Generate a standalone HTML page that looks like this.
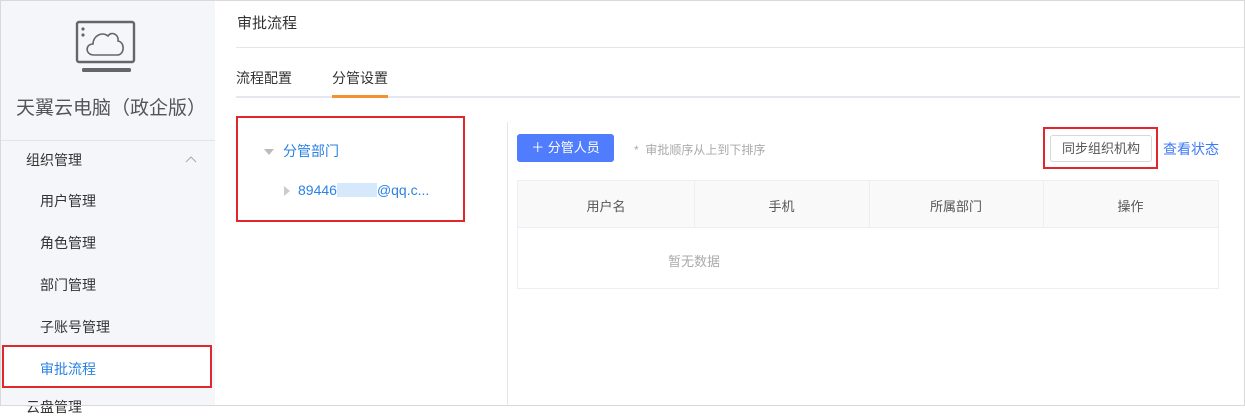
<!DOCTYPE html>
<html><head><meta charset="utf-8"><style>
*{margin:0;padding:0;box-sizing:border-box}
body{width:1245px;height:406px;overflow:hidden;background:#fff;font-family:"Liberation Sans","Noto Sans CJK SC",sans-serif;position:relative}
.a{position:absolute;white-space:nowrap}
.side{position:absolute;left:0;top:0;width:215px;height:406px;background:#f5f6fa}
.rb{position:absolute;border:2px solid #e0282c}
.frame{position:absolute;left:0;top:0;width:1245px;height:406px;border:1px solid #d9d9d9;pointer-events:none}
</style></head><body>
<div class="side"></div>
<svg class="a" style="left:74px;top:20px" width="64" height="54" viewBox="0 0 64 54">
<rect x="3" y="2" width="57" height="40" rx="2" fill="none" stroke="#666" stroke-width="2.4"/>
<circle cx="9" cy="9" r="1.6" fill="#666"/><circle cx="9" cy="15" r="1.6" fill="#666"/>
<path d="M20 35 C11 35 11 24 19 24 C19 16 28 11 34 16 C37 11 45 14 44 21 C51 22 51 35 43 35 Z" fill="none" stroke="#666" stroke-width="1.6"/>
<rect x="8" y="48" width="49" height="4" rx="1.5" fill="#666"/>
</svg>
<div class="a" style="left:16px;top:93px;font-size:19px;color:#555">天翼云电脑（政企版）</div>
<div class="a" style="left:0;top:140px;width:215px;height:1px;background:#e3e4e8"></div>
<div class="a" style="left:26px;top:150px;font-size:14px;color:#333">组织管理</div>
<svg class="a" style="left:185px;top:155px" width="12" height="8"><path d="M1 7 L6 2 L11 7" fill="none" stroke="#aaa" stroke-width="1"/></svg>
<div class="a" style="left:40px;top:191px;font-size:14px;color:#333">用户管理</div>
<div class="a" style="left:40px;top:233px;font-size:14px;color:#333">角色管理</div>
<div class="a" style="left:40px;top:275px;font-size:14px;color:#333">部门管理</div>
<div class="a" style="left:40px;top:317px;font-size:14px;color:#333">子账号管理</div>
<div class="a" style="left:2px;top:346px;width:209px;height:42px;background:#fff"></div>
<div class="a" style="left:40px;top:359px;font-size:14px;color:#2a82e4">审批流程</div>
<div class="rb" style="left:2px;top:345px;width:210px;height:43px"></div>
<div class="a" style="left:26px;top:397px;font-size:14px;color:#333">云盘管理</div>

<div class="a" style="left:237px;top:12px;font-size:15px;color:#333">审批流程</div>
<div class="a" style="left:236px;top:47px;width:1008px;height:1px;background:#e6e6e6"></div>
<div class="a" style="left:236px;top:68px;font-size:14px;color:#333">流程配置</div>
<div class="a" style="left:332px;top:68px;font-size:14px;color:#333">分管设置</div>
<div class="a" style="left:236px;top:96px;width:1004px;height:2px;background:#e4e7ed"></div>
<div class="a" style="left:332px;top:95px;width:56px;height:3px;background:#f5902f"></div>

<div class="rb" style="left:236px;top:116px;width:229px;height:106px"></div>
<svg class="a" style="left:264px;top:149px" width="10" height="7"><path d="M0 0 L10 0 L5 6Z" fill="#bbb"/></svg>
<div class="a" style="left:283px;top:141px;font-size:14px;color:#2a82e4">分管部门</div>
<svg class="a" style="left:284px;top:186px" width="7" height="10"><path d="M0 0 L6 5 L0 10Z" fill="#ccc"/></svg>
<div class="a" style="left:298px;top:182px;font-size:14px;color:#2a82e4">89446<span style="display:inline-block;width:40px;height:14px;background:#d6e8fc;vertical-align:-2px"></span>@qq.c...</div>

<div class="a" style="left:507px;top:122px;width:1px;height:284px;background:#e6e6e6"></div>
<div class="a" style="left:517px;top:134px;width:97px;height:28px;background:#507cfe;border-radius:3px;color:#fff;font-size:13px;line-height:28px;text-align:center">＋ 分管人员</div>
<div class="a" style="left:634px;top:141px;font-size:12px;color:#aaa">*&nbsp; 审批顺序从上到下排序</div>
<div class="rb" style="left:1043px;top:127px;width:115px;height:42px"></div>
<div class="a" style="left:1050px;top:135px;width:102px;height:27px;border:1px solid #d8d8d8;border-radius:3px;font-size:13px;color:#555;line-height:25px;text-align:center">同步组织机构</div>
<div class="a" style="left:1163px;top:139px;font-size:14px;color:#3e7bf5">查看状态</div>

<div class="a" style="left:517px;top:180px;width:702px;height:109px;border:1px solid #ebeef5"></div>
<div class="a" style="left:518px;top:181px;width:700px;height:47px;background:#f9f9f9;border-bottom:1px solid #ebeef5"></div>
<div class="a" style="left:694px;top:181px;width:1px;height:47px;background:#eee"></div>
<div class="a" style="left:869px;top:181px;width:1px;height:47px;background:#eee"></div>
<div class="a" style="left:1043px;top:181px;width:1px;height:47px;background:#eee"></div>
<div class="a" style="left:518px;top:196px;width:176px;text-align:center;font-size:13px;color:#555">用户名</div>
<div class="a" style="left:694px;top:196px;width:175px;text-align:center;font-size:13px;color:#555">手机</div>
<div class="a" style="left:869px;top:196px;width:174px;text-align:center;font-size:13px;color:#555">所属部门</div>
<div class="a" style="left:1043px;top:196px;width:175px;text-align:center;font-size:13px;color:#555">操作</div>
<div class="a" style="left:668px;top:251px;font-size:13px;color:#aaa">暂无数据</div>
<div class="frame"></div>
</body></html>
